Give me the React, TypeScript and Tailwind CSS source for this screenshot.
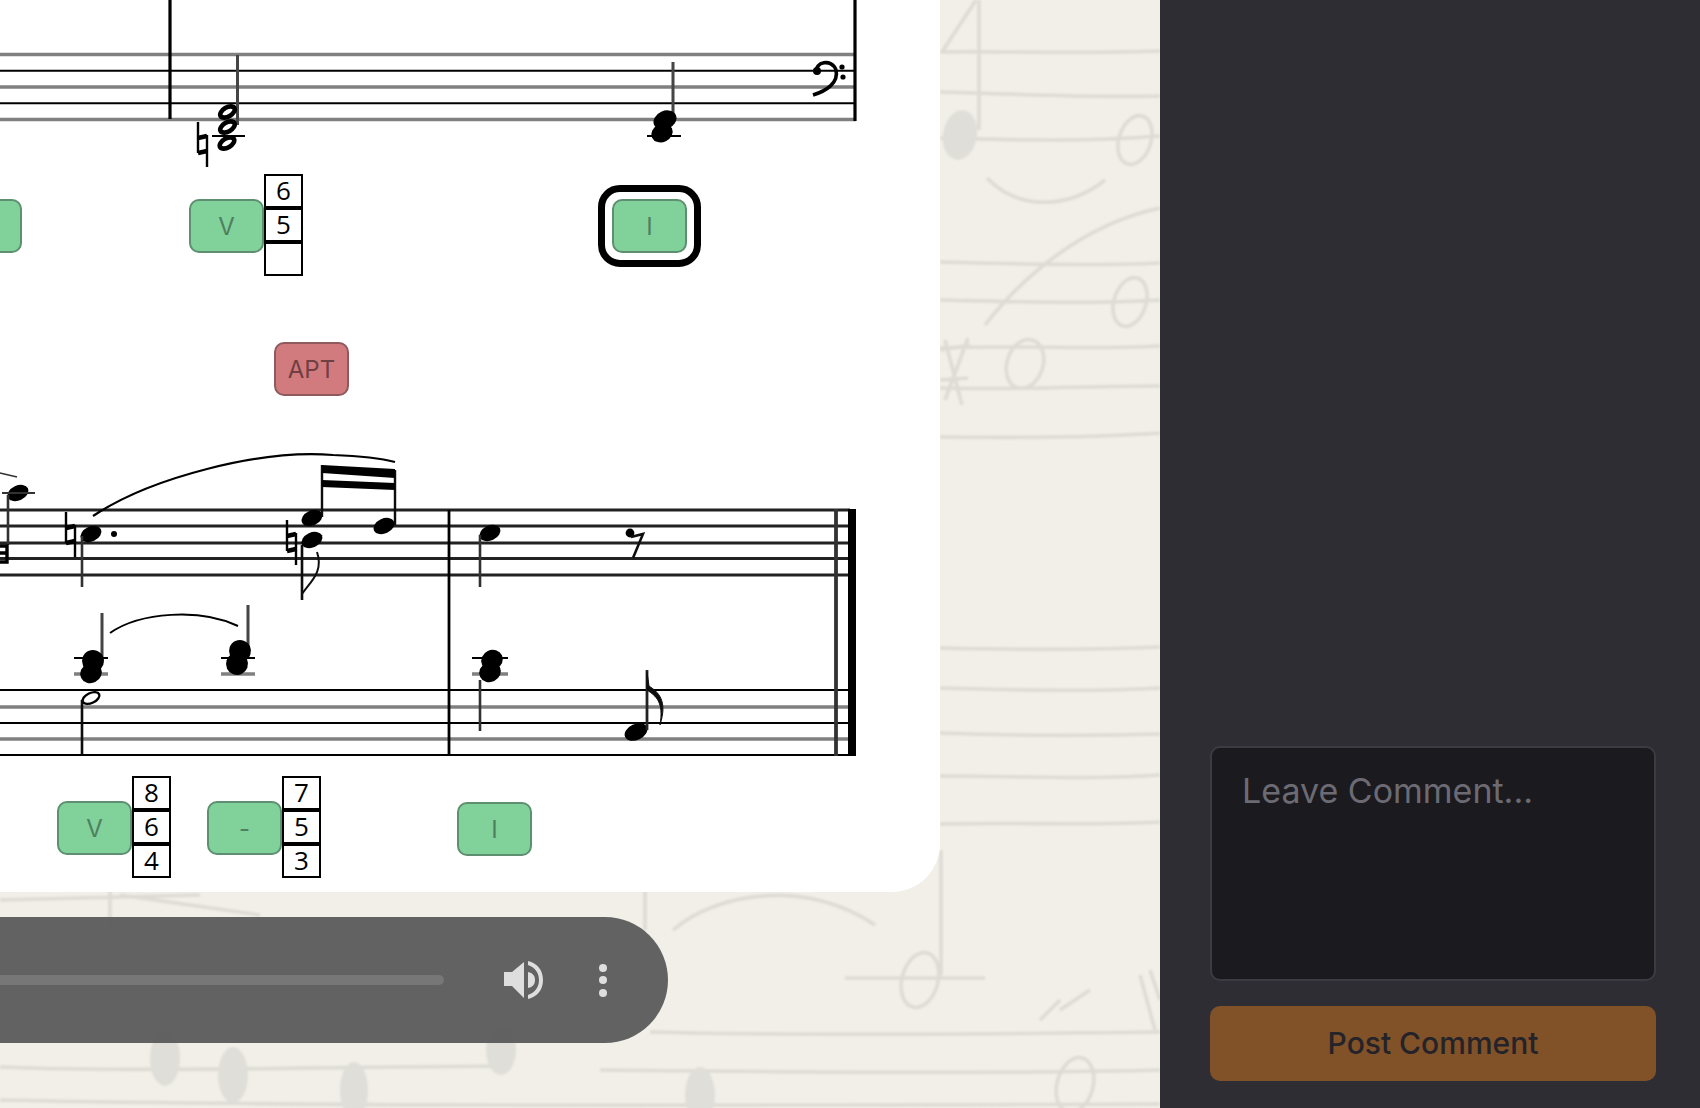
import React from "react";

const staffTop = [54.5, 70.8, 87, 103.2, 119.5];
const staffMid = [510, 526, 543, 558.5, 575];
const staffLow = [690, 707, 723, 739, 755];

const Head = ({ x, y, rx = 11, ry = 7.5 }: { x: number; y: number; rx?: number; ry?: number }) => (
  <ellipse cx={x} cy={y} rx={rx} ry={ry} transform={`rotate(-25 ${x} ${y})`} fill="#000" />
);

const Natural = ({ x, y }: { x: number; y: number }) => (
  <g stroke="#000" fill="none">
    <path d={`M${x} ${y}v31M${x + 9} ${y + 13}v32`} strokeWidth="2.4" />
    <path d={`M${x} ${y + 16}l9 -2M${x} ${y + 31}l9 -2`} strokeWidth="4.5" />
  </g>
);

const ScoreDrawing = () => (
  <svg className="absolute left-0 top-0" width="940" height="892" viewBox="0 0 940 892">
    <defs>
      <filter id="scan">
        <feGaussianBlur stdDeviation="0.55" />
      </filter>
    </defs>
    <g filter="url(#scan)">
      {staffTop.map((y, i) => (
        <line key={y} x1="0" x2="856" y1={y} y2={y} stroke={i % 2 ? "#000" : "#808080"} strokeWidth={i % 2 ? 2 : 3.6} />
      ))}
      {staffMid.map((y) => (
        <line key={y} x1="0" x2="850" y1={y} y2={y} stroke="#222" strokeWidth="2.8" />
      ))}
      {staffLow.map((y, i) => (
        <line key={y} x1="0" x2="850" y1={y} y2={y} stroke={i % 2 ? "#808080" : "#000"} strokeWidth={i % 2 ? 3.6 : 2} />
      ))}

      {/* top system */}
      <path d="M170 0v119M855 0v121" stroke="#000" strokeWidth="3.2" />
      <path d="M237.5 55v70M673 62v62" stroke="#444" strokeWidth="3" />
      <path d="M212 136h33M647 136h34" stroke="#000" strokeWidth="1.8" />
      <g fill="none" stroke="#000" strokeWidth="4.6">
        <ellipse cx="227.5" cy="112" rx="8" ry="4.5" transform="rotate(-30 227.5 112)" />
        <ellipse cx="227.5" cy="127" rx="8" ry="4.5" transform="rotate(-30 227.5 127)" />
        <ellipse cx="227" cy="143" rx="8" ry="4.5" transform="rotate(-30 227 143)" />
      </g>
      <Natural x={198} y={122} />
      <Head x={665} y={120} rx={12} ry={9} />
      <Head x={662} y={133} rx={11} ry={9} />
      <path d="M817 72C814 62 832 58 836 70C839 83 826 91 813 95" fill="none" stroke="#000" strokeWidth="3.6" />
      <circle cx="817" cy="71" r="4" fill="#000" />
      <circle cx="842" cy="67" r="2.6" fill="#000" />
      <circle cx="843" cy="77" r="2.6" fill="#000" />

      {/* middle and lower staves */}
      <path d="M449 510v246" stroke="#000" strokeWidth="2.8" />
      <path d="M836 509v247" stroke="#333" strokeWidth="3.8" />
      <rect x="848" y="509" width="8" height="247" fill="#000" />

      <path d="M0 473l17 4" stroke="#333" strokeWidth="1.4" fill="none" />
      <Head x={18} y={493} />
      <path d="M2 493h33" stroke="#333" strokeWidth="1.8" />
      <path d="M8 495v50" stroke="#333" strokeWidth="2.6" />
      <path d="M0 546h7v16h-7M0 553h7" fill="none" stroke="#000" strokeWidth="3.4" />

      <Natural x={66} y={512} />
      <Head x={91} y={534} />
      <path d="M82 536v51" stroke="#333" strokeWidth="2.6" />
      <circle cx="114" cy="534" r="3" fill="#000" />
      <path d="M93 516C150 478 260 449 333 455C360 456 380 458 395 462" fill="none" stroke="#000" strokeWidth="2.2" />

      <Head x={312} y={518} />
      <Head x={384} y={526} />
      <path d="M322 465v52M395 470v55" stroke="#111" strokeWidth="2.4" />
      <path d="M322 465L395 469V478L322 473ZM322 480L395 483V490L322 487Z" fill="#000" />
      <Natural x={287} y={520} />
      <Head x={312} y={540} />
      <path d="M302 545v55" stroke="#111" strokeWidth="2.6" />
      <path d="M302 594C310 582 324 572 317 552" fill="none" stroke="#111" strokeWidth="2" />

      <path d="M102 613v50M248 605v52" stroke="#444" strokeWidth="3" />
      <path d="M74 658h34M221 658h34M472 658h36" stroke="#000" strokeWidth="2" />
      <path d="M74 674h34M221 674h34M472 674h36" stroke="#808080" strokeWidth="3.4" />
      <Head x={93} y={661} rx={11} ry={11} />
      <Head x={91} y={673} rx={11} ry={10} />
      <Head x={240} y={651} rx={11} ry={11} />
      <Head x={237} y={664} rx={11} ry={11} />
      <Head x={492} y={660} rx={11} ry={10} />
      <Head x={490} y={672} rx={11} ry={10} />
      <path d="M110 633C140 612 200 608 238 626" fill="none" stroke="#000" strokeWidth="2" />
      <ellipse cx="91" cy="698" rx="9" ry="5" transform="rotate(-25 91 698)" fill="#fff" stroke="#000" strokeWidth="2.4" />
      <path d="M82 700v55" stroke="#111" strokeWidth="2.6" />

      <Head x={490} y={533} />
      <path d="M480 535v52" stroke="#333" strokeWidth="2.6" />
      <circle cx="630" cy="533" r="4.4" fill="#000" />
      <path d="M631 537L643 534L633 558" fill="none" stroke="#111" strokeWidth="2.6" />
      <path d="M480 680v51" stroke="#333" strokeWidth="2.6" />
      <Head x={636} y={732} rx={12} ry={8} />
      <path d="M647 670v60" stroke="#222" strokeWidth="2.8" />
      <path d="M647 672L649 686C658 692 668 700 660 725C664 702 656 696 647 690Z" fill="#111" stroke="#111" strokeWidth="1" />
    </g>
  </svg>
);

const PaperDrawing = () => (
  <svg className="absolute left-0 top-0" width="1160" height="1108" viewBox="0 0 1160 1108">
    <defs>
      <filter id="soft">
        <feGaussianBlur stdDeviation="1.2" />
      </filter>
    </defs>
    <g filter="url(#soft)" fill="none" stroke="#dedbd5" strokeWidth="3.6">
      <path d="M940 52C1000 51 1080 54 1160 51M940 92C1020 94 1090 98 1160 96M940 138C1020 140 1080 142 1160 136" />
      <path d="M940 262C1020 264 1090 266 1160 263M940 300C1030 302 1090 304 1160 300M940 348C1020 345 1090 350 1160 346M940 388C1020 390 1090 386 1160 386M940 437C1020 438 1090 438 1160 433" />
      <path d="M940 648C1020 650 1090 650 1160 647M940 688C1020 690 1090 692 1160 688M940 733C1020 736 1090 736 1160 734M940 776C1020 776 1090 780 1160 775M940 824C1020 822 1090 826 1160 822" />
      <path d="M650 1032C800 1036 1000 1034 1160 1032M600 1070C800 1072 1000 1074 1160 1070M0 1067C120 1072 280 1068 500 1066M0 1100C300 1106 600 1106 1160 1104" />
      <path d="M979 0V130M976 0L942 52" />
      <path d="M987 178C1020 212 1070 208 1105 180" />
      <path d="M985 325C1020 280 1080 225 1160 208" />
      <ellipse cx="1135" cy="140" rx="16" ry="25" transform="rotate(18 1135 140)" />
      <ellipse cx="1130" cy="302" rx="16" ry="25" transform="rotate(18 1130 302)" />
      <ellipse cx="1025" cy="364" rx="18" ry="25" transform="rotate(18 1025 364)" />
      <path d="M945 340L962 405M968 338L945 400M940 350L970 345M940 380L968 378" />
      <path d="M941 850V975M845 978H985M673 930C720 890 810 880 875 925M645 880V930M1040 1020L1060 1000M1060 1010L1090 990" />
      <ellipse cx="920" cy="980" rx="18" ry="28" transform="rotate(15 920 980)" />
      <ellipse cx="1075" cy="1085" rx="18" ry="28" transform="rotate(15 1075 1085)" />
      <path d="M1140 975L1155 1030M1150 970L1160 1000M110 890V930M0 900L200 895M120 895L260 915" />
      <g fill="#e0ded8" stroke="none">
        <ellipse cx="960" cy="135" rx="17" ry="25" transform="rotate(10 960 135)" />
        <ellipse cx="165" cy="1058" rx="15" ry="28" />
        <ellipse cx="233" cy="1075" rx="15" ry="28" />
        <ellipse cx="354" cy="1090" rx="14" ry="28" />
        <ellipse cx="501" cy="1050" rx="15" ry="25" />
        <ellipse cx="700" cy="1095" rx="15" ry="28" />
      </g>
    </g>
  </svg>
);

const RomanButton = ({ label, red }: { label: string; red?: boolean }) => (
  <div
    className={`flex h-[54px] w-[75px] shrink-0 items-center justify-center rounded-[10px] border-2 pt-px text-[24px] ${
      red ? "border-[#8e5a5e] bg-[#d17b7e] text-[#6f3f42]" : "border-[#5d8f70] bg-[#80d19a] text-[#4f7f60]"
    }`}
  >
    {label}
  </div>
);

const Figures = ({ nums }: { nums: string[] }) => (
  <div className="flex w-[39px] flex-col font-['Open_Sans',sans-serif] text-[26px] leading-none text-black">
    {nums.map((n, i) => (
      <div key={i} className="flex h-[34px] items-center justify-center border-2 border-black pb-[2px]">
        {n}
      </div>
    ))}
  </div>
);

const Harmony = ({ label, nums, className }: { label: string; nums: string[]; className: string }) => (
  <div className={`absolute flex items-start ${className}`}>
    <div className="mt-[25px]">
      <RomanButton label={label} />
    </div>
    <Figures nums={nums} />
  </div>
);

const VolumeIcon = () => (
  <svg width="40" height="38" viewBox="0 0 40 38" fill="#dedede">
    <path d="M0 11H8L20 1V37L8 25H0Z" />
    <path d="M24 11C29 12 31 15 31 19C31 23 29 26 24 27Z" />
    <path d="M24 0C33 2 39 9 39 19C39 29 33 36 24 38V34C30 32 35 27 35 19C35 11 30 6 24 4Z" />
  </svg>
);

export default function App() {
  return (
    <div className="flex h-[1108px] w-[1700px] overflow-hidden font-['Inter',sans-serif]">
      <main className="relative w-[1160px] shrink-0 bg-[#f1efe8]">
        <PaperDrawing />

        <section className="relative h-[892px] w-[940px] rounded-br-[48px] bg-white">
          <ScoreDrawing />

          <div className="absolute left-[-53px] top-[199px]">
            <RomanButton label="" />
          </div>
          <Harmony label="V" nums={["6", "5", ""]} className="left-[189px] top-[174px]" />
          <div className="absolute left-[598px] top-[185px] rounded-[22px] border-[7px] border-black p-[7px]">
            <RomanButton label="I" />
          </div>
          <div className="absolute left-[274px] top-[342px]">
            <RomanButton label="APT" red />
          </div>
          <Harmony label="V" nums={["8", "6", "4"]} className="left-[57px] top-[776px]" />
          <Harmony label="-" nums={["7", "5", "3"]} className="left-[207px] top-[776px]" />
          <div className="absolute left-[457px] top-[802px]">
            <RomanButton label="I" />
          </div>
        </section>

        <div className="relative mt-[25px] flex h-[126px] w-[668px] items-center rounded-r-[63px] bg-[#5e5d5d]/97 pr-[61px]">
          <div className="h-[10px] flex-1 rounded-r-full bg-[#787777]" />
          <div className="ml-[60px]">
            <VolumeIcon />
          </div>
          <div className="ml-[55px] flex w-[8px] flex-col gap-[4.5px]">
            <span className="h-[8px] w-[8px] rounded-full bg-[#dedede]" />
            <span className="h-[8px] w-[8px] rounded-full bg-[#dedede]" />
            <span className="h-[8px] w-[8px] rounded-full bg-[#dedede]" />
          </div>
        </div>
      </main>

      <aside className="flex flex-1 flex-col justify-end bg-[#2e2d33] pb-[27px] pl-[50px] pr-[44px]">
        <textarea
          placeholder="Leave Comment..."
          className="h-[235px] w-full resize-none rounded-[10px] border-2 border-[#3c3b43] bg-[#1b1a1f] px-[30px] pt-[17px] text-[34px] outline-none placeholder:text-[#6c6b73]"
        />
        <button
          type="button"
          className="mt-[25px] h-[75px] w-full rounded-[10px] bg-[#815128] text-[30px] font-medium text-[#242329]"
        >
          Post Comment
        </button>
      </aside>
    </div>
  );
}
